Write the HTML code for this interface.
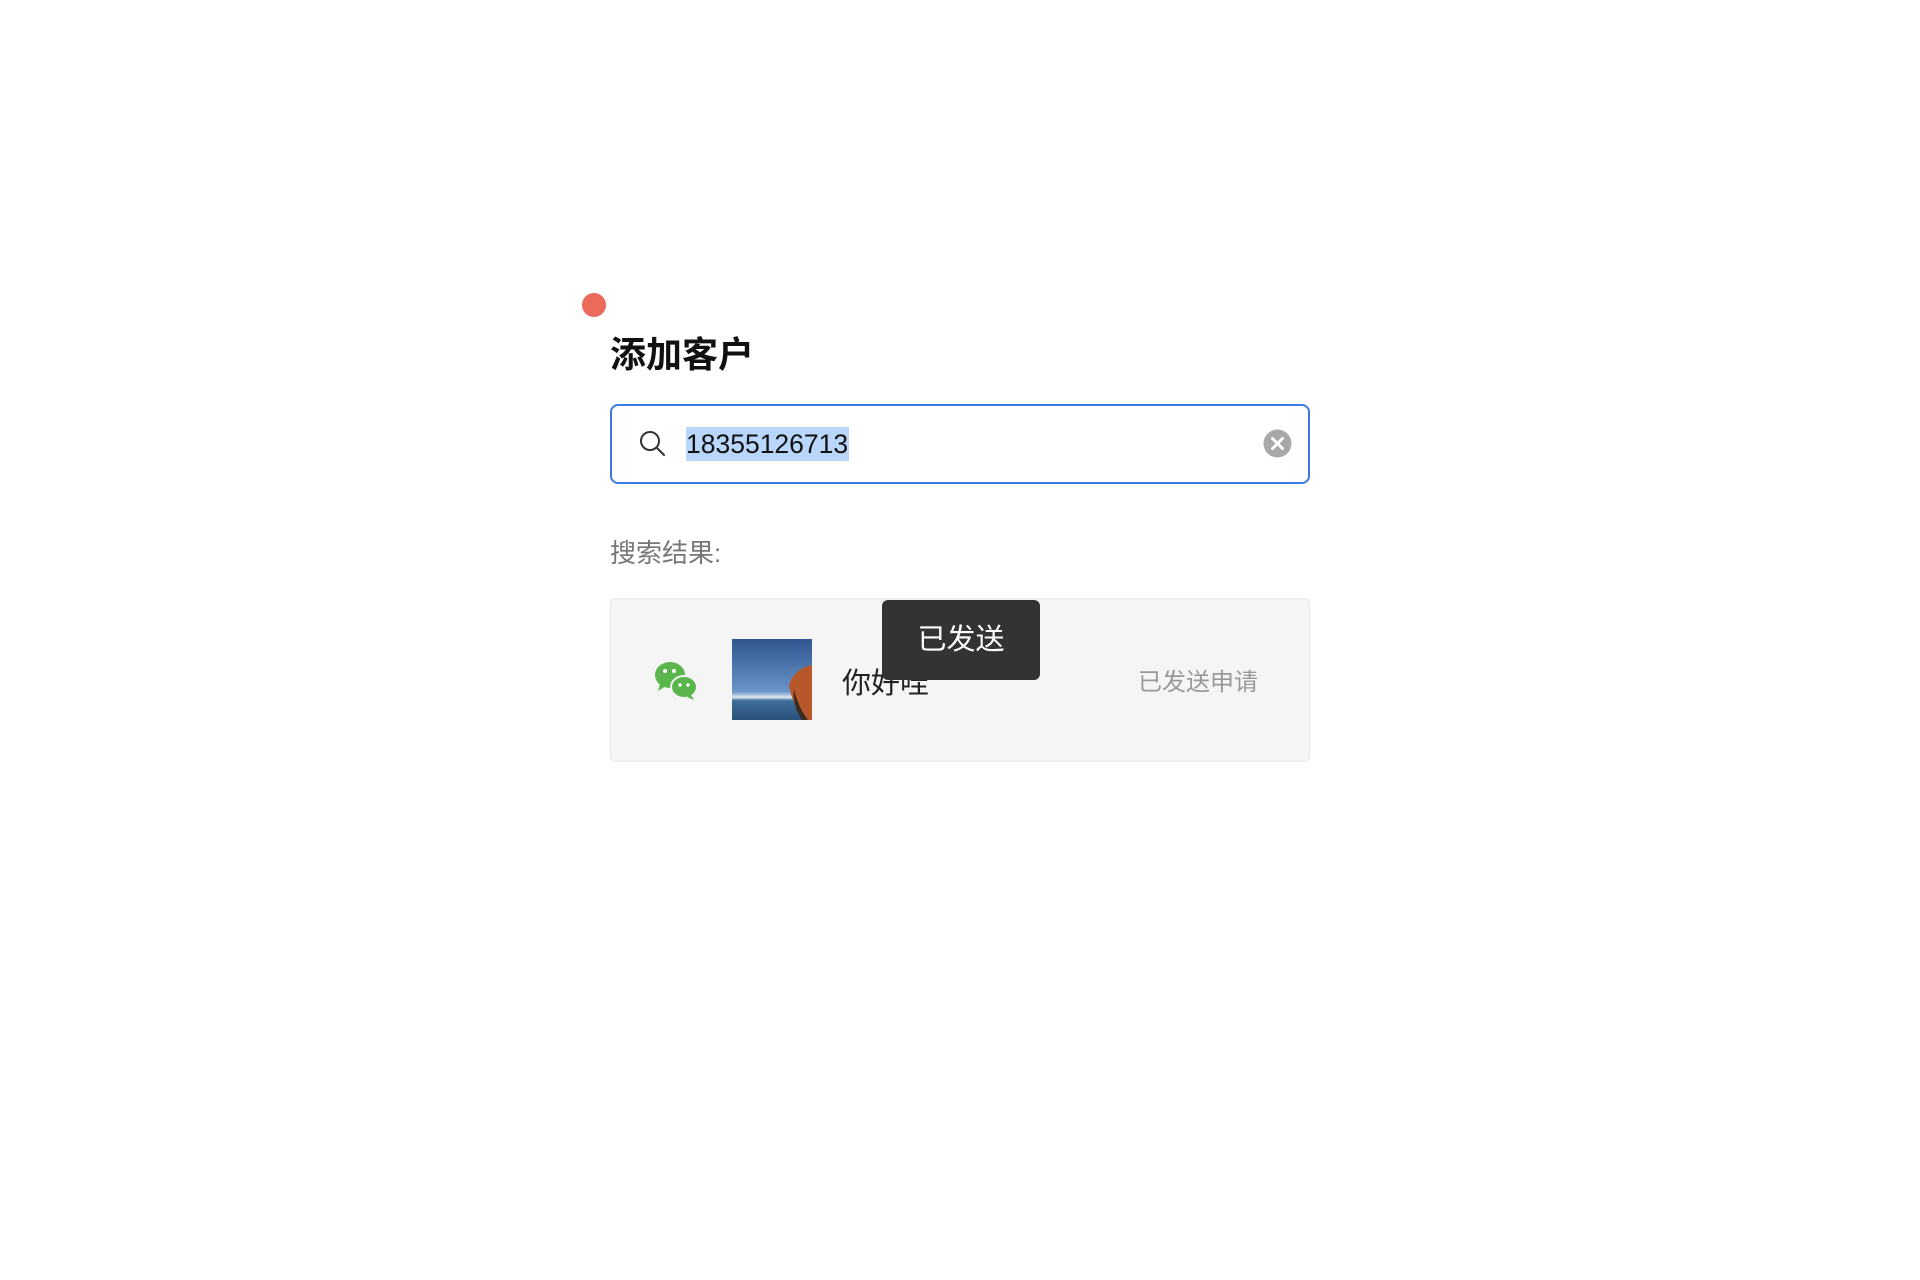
<!DOCTYPE html>
<html><head><meta charset="utf-8"><style>
body{margin:0;width:1920px;height:1280px;background:#fff;position:relative;font-family:"Liberation Sans","Noto Sans CJK SC",sans-serif;overflow:hidden}
.a{position:absolute}
</style></head><body>
<div class="a" style="left:582px;top:293px;width:24px;height:24px;border-radius:50%;background:#eb6a5c"></div>
<div class="a" style="left:610px;top:333px;font-size:36px;font-weight:bold;color:#111;line-height:44px">添加客户</div>
<div class="a" style="left:610px;top:404px;width:696px;height:76px;border:2px solid #3b7be8;border-radius:8px;box-sizing:content-box"></div>
<svg class="a" style="left:638px;top:429px" width="30" height="30" viewBox="0 0 30 30"><circle cx="12" cy="12" r="9" fill="none" stroke="#333" stroke-width="2"/><line x1="18.5" y1="18.5" x2="26" y2="26" stroke="#333" stroke-width="2" stroke-linecap="round"/></svg>
<div class="a" style="left:686px;top:427px;height:34px;background:#b9d6fb;font-size:26.5px;line-height:35px;color:#111;padding-right:1px">18355126713</div>
<svg class="a" style="left:1263px;top:429px" width="29" height="29" viewBox="0 0 29 29"><circle cx="14.5" cy="14.5" r="14" fill="#a8a8a8"/><path d="M9.5 9.5L19.5 19.5M19.5 9.5L9.5 19.5" stroke="#fff" stroke-width="3" stroke-linecap="round"/></svg>
<div class="a" style="left:610px;top:537px;font-size:26px;color:#777;line-height:32px">搜索结果:</div>
<div class="a" style="left:610px;top:598px;width:698px;height:162px;background:#f5f5f5;border:1px solid #e8e8e8;border-radius:6px"></div>
<svg class="a" style="left:653px;top:658px" width="46" height="44" viewBox="0 0 46 44"><ellipse cx="17" cy="17" rx="15" ry="13" fill="#5ab64c"/><path d="M7 26 L5 33 L13 28Z" fill="#5ab64c"/><ellipse cx="31" cy="29" rx="13" ry="11" fill="#5ab64c" stroke="#f5f5f5" stroke-width="2"/><path d="M38 37 L41 42 L34 39Z" fill="#5ab64c"/><circle cx="12" cy="13" r="2" fill="#fff"/><circle cx="21" cy="13" r="2" fill="#fff"/><circle cx="27" cy="27" r="1.7" fill="#fff"/><circle cx="35" cy="27" r="1.7" fill="#fff"/></svg>
<svg class="a" style="left:732px;top:639px" width="80" height="81" viewBox="0 0 80 81"><defs><linearGradient id="s" x1="0" y1="0" x2="0" y2="1"><stop offset="0" stop-color="#2f5690"/><stop offset="0.65" stop-color="#6a94c8"/><stop offset="0.72" stop-color="#dfe8f2"/><stop offset="0.76" stop-color="#3f6e9a"/><stop offset="1" stop-color="#27507a"/></linearGradient></defs><rect width="80" height="81" fill="url(#s)"/><path d="M80 26 Q62 30 57 46 Q60 66 74 81 L80 81Z" fill="#b8582a"/><path d="M62 50 Q66 68 76 81 L70 81 Q60 66 62 50Z" fill="#3a2a20"/></svg>
<div class="a" style="left:842px;top:666px;font-size:29px;color:#222;line-height:36px">你好哇</div>
<div class="a" style="left:1138px;top:667px;font-size:24px;color:#999;line-height:32px">已发送申请</div>
<div class="a" style="left:882px;top:600px;width:158px;height:80px;background:#333;border-radius:6px;color:#fff;font-size:29px;text-align:center;line-height:80px">已发送</div>
</body></html>
